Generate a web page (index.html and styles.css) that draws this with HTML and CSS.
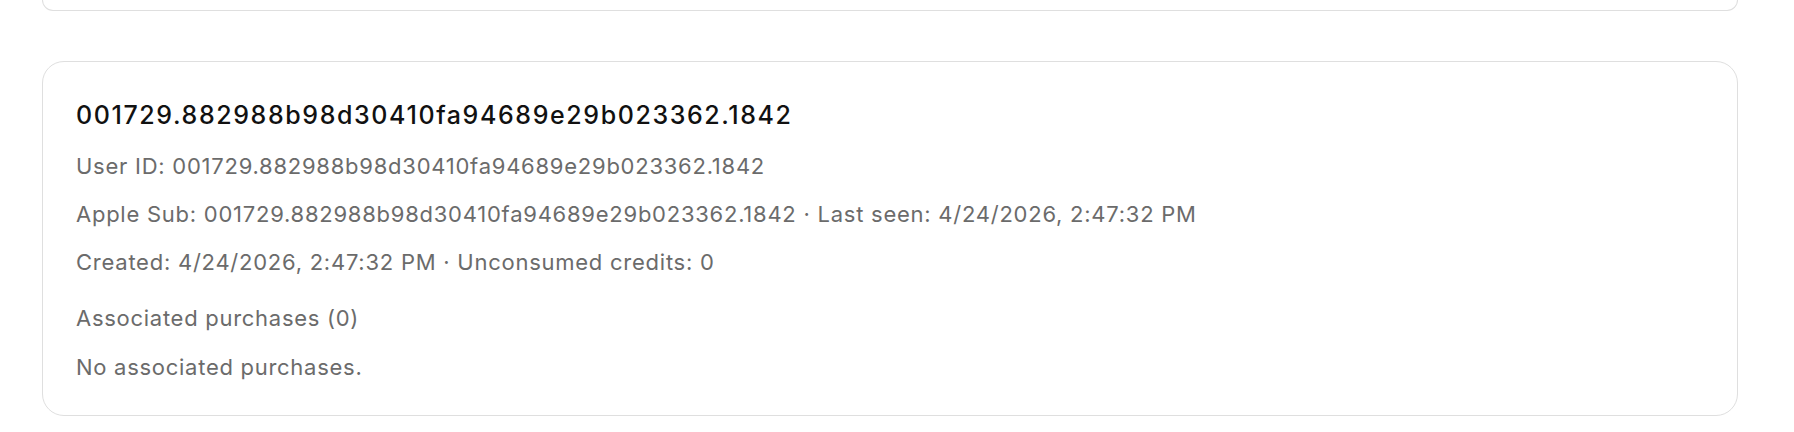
FILE: index.html
```html
<!DOCTYPE html>
<html lang="en">
<head>
<meta charset="utf-8">
<title>User</title>
<link rel="stylesheet" href="styles.css">
</head>
<body>
<div class="page">
  <div class="card card-prev"></div>
  <div class="card">
    <h2 class="title">001729.882988b98d30410fa94689e29b023362.1842</h2>
    <p class="meta">User ID: 001729.882988b98d30410fa94689e29b023362.1842</p>
    <p class="meta">Apple Sub: 001729.882988b98d30410fa94689e29b023362.1842 · Last seen: 4/24/2026, 2:47:32 PM</p>
    <p class="meta">Created: 4/24/2026, 2:47:32 PM · Unconsumed credits: 0</p>
    <h3 class="section">Associated purchases (0)</h3>
    <p class="empty">No associated purchases.</p>
  </div>
</div>
</body>
</html>
```

FILE: styles.css
```css
* { box-sizing: border-box; }
html, body { margin: 0; padding: 0; background: #ffffff; }
body {
  font-family: Inter, "Noto Sans", "Liberation Sans", sans-serif;
  color: #111111;
}
.page {
  width: 1696px;
  margin-left: 42px;
  display: flex;
  flex-direction: column;
  gap: 50px;
}
.card {
  border: 1px solid #dfdfdf;
  border-radius: 22px;
  padding: 37px 33px 32px 33px;
  background: #fff;
}
.card-prev {
  height: 11px;
  padding: 0;
  border-top: none;
  border-top-left-radius: 0;
  border-top-right-radius: 0;
}
.title {
  margin: 0;
  font-size: 25px;
  line-height: 32px;
  font-weight: 500;
  letter-spacing: 1.6px;
  color: #111111;
}
.meta {
  margin: 0;
  font-size: 22px;
  line-height: 32px;
  letter-spacing: 0.75px;
  color: #6b6b6b;
}
.title + .meta { margin-top: 19px; }
.meta + .meta { margin-top: 16px; }
.section {
  margin: 24px 0 0 0;
  font-size: 22px;
  line-height: 32px;
  font-weight: 400;
  letter-spacing: 0.72px;
  color: #6b6b6b;
}
.empty {
  margin: 17px 0 0 0;
  font-size: 22px;
  line-height: 32px;
  letter-spacing: 0.72px;
  color: #6b6b6b;
}
```
